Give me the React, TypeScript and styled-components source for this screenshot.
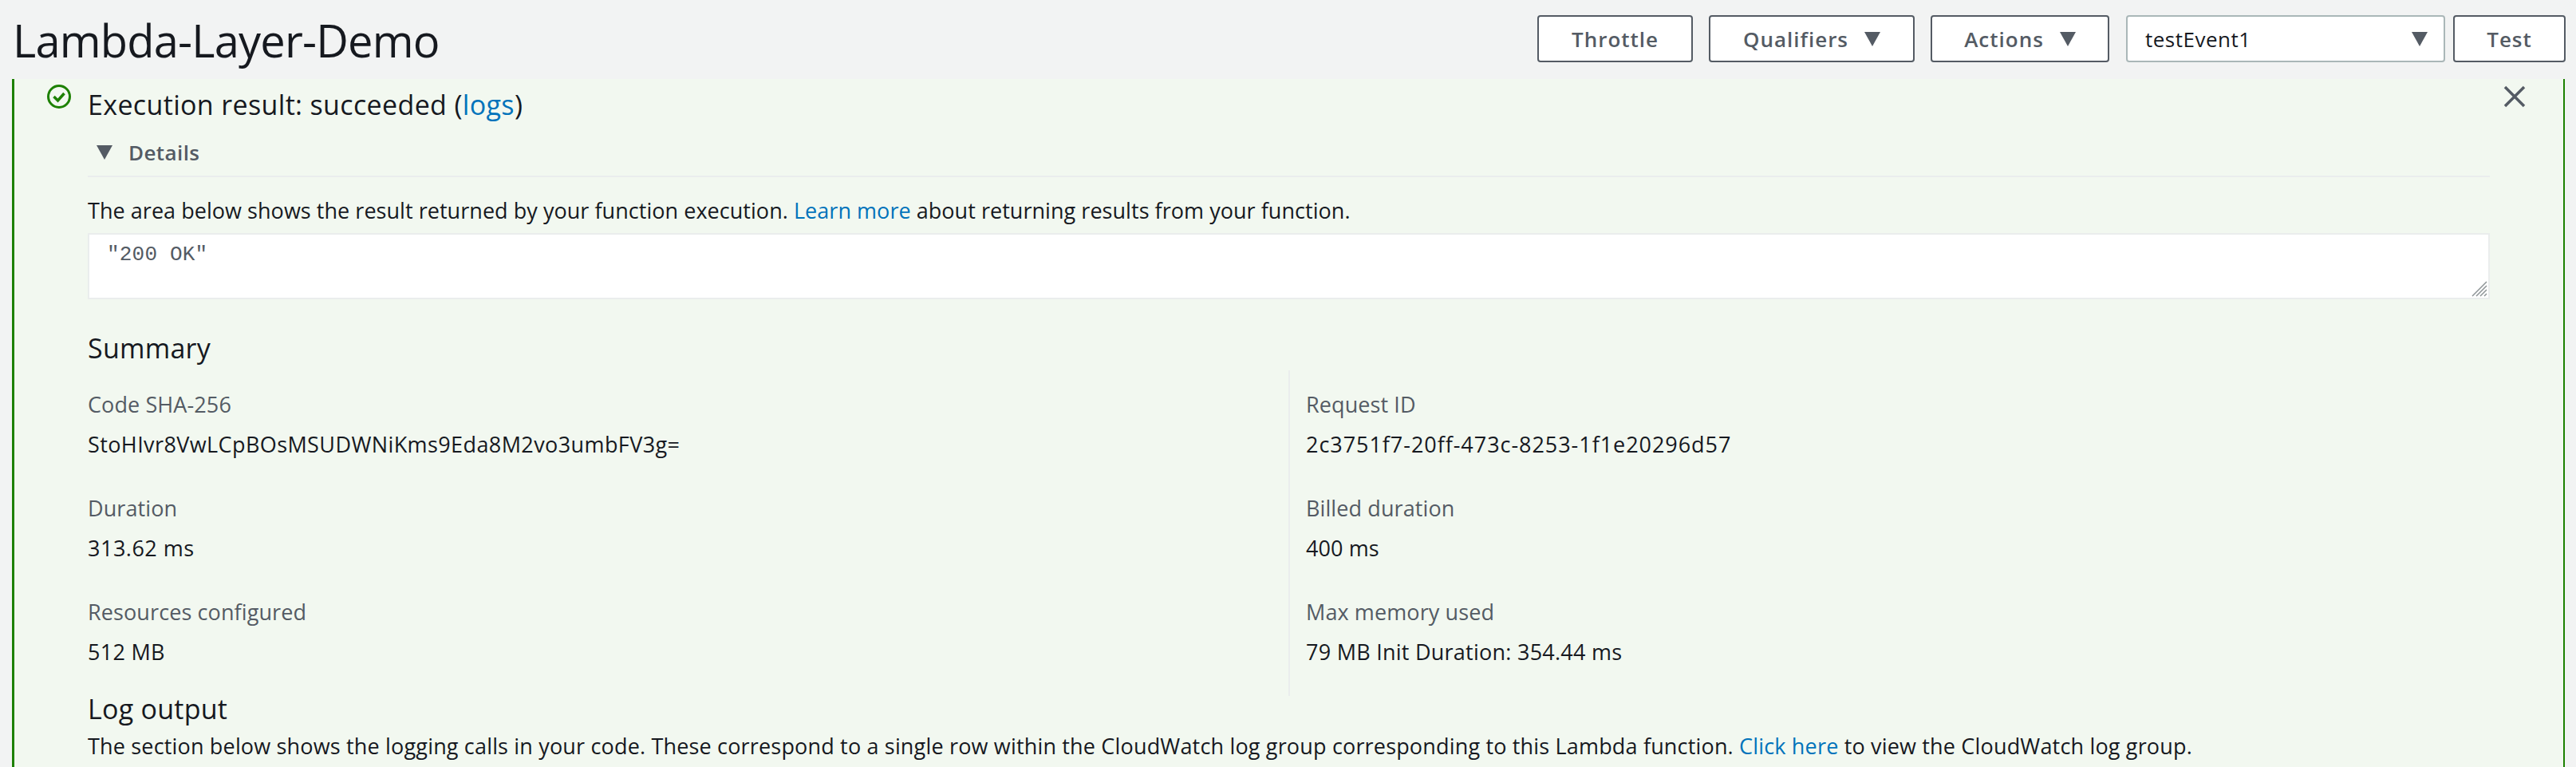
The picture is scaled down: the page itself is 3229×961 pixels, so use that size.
import styled, { createGlobalStyle } from 'styled-components'

const FONT = `"Open Sans", "Noto Sans", sans-serif`

const Global = createGlobalStyle`
  html, body { margin: 0; padding: 0; background: #f2f3f3; }
  body { width: 3229px; height: 961px; overflow: hidden; font-family: ${FONT}; color: #16191f; }
`
const Header = styled.header`
  display: flex; align-items: center; justify-content: space-between;
  height: 99px; padding: 0 13px 0 16px; box-sizing: border-box;
`
const Title = styled.h1`
  margin: 0; font-size: 56px; font-weight: 400; line-height: 98px; letter-spacing: -0.8px;
`
const Toolbar = styled.div`
  display: flex; align-items: center; gap: 20px; margin-top: -2px;
`
const Button = styled.button<{ $width: number }>`
  display: flex; align-items: center; justify-content: center; gap: 20px;
  width: ${({ $width }) => $width}px; height: 59px; box-sizing: border-box;
  background: #fff; border: 2px solid #545b64; border-radius: 4px;
  font: 600 26px ${FONT}; letter-spacing: 1px; color: #545b64; padding: 0;
`
const SelectBox = styled.div`
  display: flex; align-items: center; justify-content: space-between;
  width: 400px; height: 59px; box-sizing: border-box; padding: 0 20px 0 22px; margin: 0 -10px 0 1px;
  background: #fff; border: 2px solid #aab7b8; border-radius: 4px;
  font-size: 26px; letter-spacing: 0.5px; color: #16191f;
`
const Caret = styled.svg`
  width: 20px; height: 18px; fill: #545b64; flex: none;
`
const Panel = styled.section`
  position: relative; height: 862px; margin: 0 14px 0 15px; box-sizing: border-box;
  background: #f2f8f0; border-left: 3px solid #1d8102; border-right: 2px solid #1d8102;
  padding: 0 92px 0 92px;
`
const StatusIcon = styled.svg`
  position: absolute; left: 40px; top: 6px; width: 32px; height: 32px;
`
const CloseButton = styled.svg`
  position: absolute; right: 47px; top: 8px; width: 28px; height: 28px;
  stroke: #545b64; stroke-width: 3.5; fill: none;
`
const Heading = styled.h2`
  margin: 0; height: 62px; font-size: 34px; font-weight: 400; line-height: 65px; letter-spacing: 0.35px;
`
const Expander = styled.div`
  display: flex; align-items: center; gap: 20px; height: 59px; padding-left: 11px;
  border-bottom: 2px solid #eaeded;
  font-size: 26px; font-weight: 600; letter-spacing: 0.4px; color: #545b64;
`
const Paragraph = styled.p<{ $spacing: number }>`
  margin: 0; font-size: 27px; line-height: 42px; letter-spacing: ${({ $spacing }) => $spacing}px; white-space: nowrap;
`
const ResultBlock = styled(Paragraph)`
  padding-top: 21px; height: 71px; box-sizing: border-box;
`
const Link = styled.a`
  color: #0073bb; text-decoration: none;
`
const OutputWrap = styled.div`
  position: relative; height: 83px; margin-top: -1px;
`
const Output = styled.textarea`
  display: block; width: 100%; height: 100%; box-sizing: border-box; margin: 0;
  background: #fff; border: 2px solid #eaeded; padding: 10px 22px; outline: none; resize: none;
  font: 26px/30px "Liberation Mono", monospace; letter-spacing: 0.2px; color: #545b64;
`
const ResizeGrip = styled.svg`
  position: absolute; right: 3px; bottom: 3px; width: 20px; height: 20px;
  stroke: #8d9396; stroke-width: 1.5;
`
const SectionTitle = styled.h3`
  margin: 0; font-size: 34px; font-weight: 400; line-height: 48px; letter-spacing: 0.25px;
`
const SummaryTitle = styled(SectionTitle)`
  margin-top: 37px;
`
const SummaryGrid = styled.div`
  display: grid; grid-template-columns: 1505px 1fr; margin-top: 4px; height: 392px;
`
const Column = styled.div<{ $divided?: boolean }>`
  display: flex; flex-direction: column; padding-top: 18px;
  ${({ $divided }) => $divided && 'border-left: 2px solid #eaeded; padding-left: 20px;'}
`
const Field = styled.div`
  height: 130px;
`
const Label = styled.div`
  font-size: 27px; line-height: 50px; letter-spacing: 0.1px; color: #545b64;
`
const Value = styled.div<{ $spacing: number }>`
  font-size: 27px; line-height: 50px; letter-spacing: ${({ $spacing }) => $spacing}px;
`
const LogTitle = styled(SectionTitle)`
  margin: 8px 0 2px;
`

const left = [
  { label: 'Code SHA-256', value: 'StoHIvr8VwLCpBOsMSUDWNiKms9Eda8M2vo3umbFV3g=', spacing: 0.4 },
  { label: 'Duration', value: '313.62 ms', spacing: 0.5 },
  { label: 'Resources configured', value: '512 MB', spacing: 0.3 },
]
const right = [
  { label: 'Request ID', value: '2c3751f7-20ff-473c-8253-1f1e20296d57', spacing: 0.95 },
  { label: 'Billed duration', value: '400 ms', spacing: 0.1 },
  { label: 'Max memory used', value: '79 MB Init Duration: 354.44 ms', spacing: 0.25 },
]

function CaretDown() {
  return (
    <Caret viewBox="0 0 20 18"><path d="M0 0h20L10 18z" /></Caret>
  )
}

export default function App() {
  return (
    <>
      <Global />
      <Header>
        <Title>Lambda-Layer-Demo</Title>
        <Toolbar>
          <Button $width={195}>Throttle</Button>
          <Button $width={258}>Qualifiers <CaretDown /></Button>
          <Button $width={224}>Actions <CaretDown /></Button>
          <SelectBox>testEvent1 <CaretDown /></SelectBox>
          <Button $width={141}>Test</Button>
        </Toolbar>
      </Header>
      <Panel>
        <StatusIcon viewBox="0 0 32 32" fill="none">
          <circle cx="16" cy="16" r="13.5" stroke="#1d8102" strokeWidth="3" />
          <path d="M9.5 16l5 5 8-9" stroke="#1d8102" strokeWidth="3.5" />
        </StatusIcon>
        <CloseButton viewBox="0 0 28 28"><path d="M2 2l24 24M26 2L2 26" /></CloseButton>
        <Heading>Execution result: succeeded (<Link href="#">logs</Link>)</Heading>
        <Expander><CaretDown />Details</Expander>
        <ResultBlock $spacing={0.04}>
          The area below shows the result returned by your function execution. <Link href="#">Learn more</Link> about returning results from your function.
        </ResultBlock>
        <OutputWrap>
          <Output readOnly value={'"200 OK"'} />
          <ResizeGrip viewBox="0 0 20 20">
            <path d="M1 19L19 1M6 19L19 6M11 19l8-8M16 19l3-3" />
          </ResizeGrip>
        </OutputWrap>
        <SummaryTitle>Summary</SummaryTitle>
        <SummaryGrid>
          <Column>
            {left.map((f) => (
              <Field key={f.label}><Label>{f.label}</Label><Value $spacing={f.spacing}>{f.value}</Value></Field>
            ))}
          </Column>
          <Column $divided>
            {right.map((f) => (
              <Field key={f.label}><Label>{f.label}</Label><Value $spacing={f.spacing}>{f.value}</Value></Field>
            ))}
          </Column>
        </SummaryGrid>
        <LogTitle>Log output</LogTitle>
        <Paragraph $spacing={0.17}>
          The section below shows the logging calls in your code. These correspond to a single row within the CloudWatch log group corresponding to this Lambda function. <Link href="#">Click here</Link> to view the CloudWatch log group.
        </Paragraph>
      </Panel>
    </>
  )
}
